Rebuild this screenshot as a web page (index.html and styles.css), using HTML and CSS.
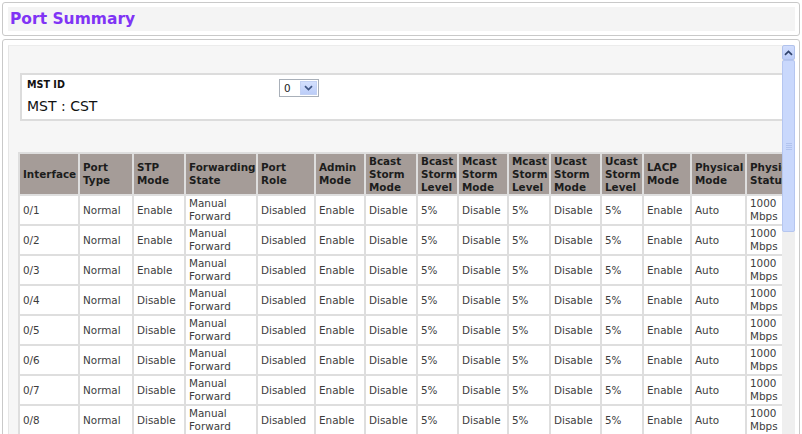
FILE: index.html
```html
<!DOCTYPE html>
<html lang="en">
<head>
<meta charset="UTF-8" />
<meta name="viewport" content="width=device-width, initial-scale=1" />
<title>Port Summary</title>
<link rel="stylesheet" href="styles.css">
</head>
<body>

<section class="panel titlePanel">
  <div class="titleBar"><h1 class="pageTitle">Port Summary</h1></div>
</section>

<section class="panel contentPanel">
  <div class="viewport">
    <div class="scrollArea">

      <div class="mstBox">
        <div class="mstRow">
          <span class="mstLabel">MST ID</span>
          <div class="fakeSelect">
            <span class="selectValue">0</span>
            <span class="selectBtn">
              <svg width="9" height="6" viewBox="0 0 9 6"><path d="M1 1.2 L4.5 4.6 L8 1.2" fill="none" stroke="#3e5583" stroke-width="1.7"/></svg>
            </span>
          </div>
        </div>
        <div class="mstName">MST : CST</div>
      </div>

      <table class="summary">
        <thead>
          <tr>
            <th class="w58">Interface</th>
            <th class="w52">Port Type</th>
            <th class="w50">STP Mode</th>
            <th class="w70">Forwarding State</th>
            <th class="w56">Port Role</th>
            <th class="w48">Admin Mode</th>
            <th class="w50">Bcast Storm Mode</th>
            <th class="w39">Bcast Storm Level</th>
            <th class="w48">Mcast Storm Mode</th>
            <th class="w40">Mcast Storm Level</th>
            <th class="w49">Ucast Storm Mode</th>
            <th class="w40">Ucast Storm Level</th>
            <th class="w46">LACP Mode</th>
            <th class="w53">Physical Mode</th>
            <th class="w55">Physical Status</th>
          </tr>
        </thead>
        <tbody id="rows"></tbody>
      </table>

    </div>

    <div class="scrollbar">
      <div class="sbButton">
        <svg width="9" height="6" viewBox="0 0 9 6"><path d="M1 4.8 L4.5 1.4 L8 4.8" fill="none" stroke="#2f426b" stroke-width="1.7"/></svg>
      </div>
      <div class="sbThumb"><span class="sbGrip"></span></div>
      <div class="sbTrack"></div>
    </div>
  </div>
</section>

<script>
  const ports = [
    ["0/1", "Enable"], ["0/2", "Enable"], ["0/3", "Enable"], ["0/4", "Disable"],
    ["0/5", "Disable"], ["0/6", "Disable"], ["0/7", "Disable"], ["0/8", "Disable"]
  ];
  const body = document.getElementById("rows");

  ports.forEach(([port, stp]) => {
    const cells = [port, "Normal", stp, "Manual Forward", "Disabled", "Enable",
      "Disable", "5%", "Disable", "5%", "Disable", "5%", "Enable", "Auto", "1000 Mbps"];
    const tr = document.createElement("tr");
    cells.forEach(text => {
      const td = document.createElement("td");
      td.textContent = text;
      tr.appendChild(td);
    });
    body.appendChild(tr);
  });
</script>

</body>
</html>
```

FILE: styles.css
```css
* {
  box-sizing: border-box;
}

html, body {
  height: 100%;
}

body {
  margin: 0;
  padding: 2px 2px 0 2px;
  background: #fff;
  font-family: "DejaVu Sans", Verdana, sans-serif;
  overflow: hidden;
}

.panel {
  border: 1px solid #c9c9c9;
  border-radius: 3px;
  background: #fff;
}

.titlePanel {
  padding: 4px 4px 4px 5px;
}

.titleBar {
  height: 24px;
  background: #f4f4f4;
  padding-left: 2px;
  display: flex;
  align-items: center;
}

.pageTitle {
  margin: 0;
  font-size: 15.5px;
  font-weight: bold;
  color: #8034f5;
}

.contentPanel {
  margin-top: 3px;
  padding: 5px 4px 0 5px;
  height: 420px;
}

.viewport {
  display: flex;
  height: 100%;
}

.scrollArea {
  flex: 1;
  min-width: 0;
  overflow: hidden;
  background: #f6f6f6;
  border-top: 1px solid #ececec;
  border-left: 1px solid #e6e6e6;
  padding: 27px 0 0 9px;
}

/* MST selector box */
.mstBox {
  margin-left: 2px;
  width: 790px;
  height: 48px;
  border: 2px solid #dcdcdc;
  background: #fff;
  padding: 4px 5px 0 5px;
}

.mstRow {
  display: grid;
  grid-template-columns: 252px 40px;
  align-items: start;
}

.mstLabel {
  font-size: 9.6px;
  font-weight: bold;
  line-height: 12px;
  color: #111;
}

.fakeSelect {
  display: flex;
  width: 40px;
  height: 18px;
  border: 1px solid #a9b0b9;
  background: #fff;
  padding: 1px;
}

.selectValue {
  flex: 1;
  font-size: 10.4px;
  line-height: 14px;
  padding-left: 3px;
  color: #222;
}

.selectBtn {
  width: 17px;
  display: flex;
  align-items: center;
  justify-content: center;
  background: linear-gradient(#d3dffd, #bccdf8);
  border: 1px solid #c3d1f3;
}

.mstName {
  font-size: 14px;
  line-height: 17px;
  color: #111;
  margin-top: 1px;
}

/* summary table */
.summary {
  margin-top: 31px;
  border-collapse: separate;
  border-spacing: 2px;
  background: #dedede;
  table-layout: fixed;
  width: 786px;
}

.summary th {
  height: 40px;
  padding: 0 3px;
  background: #a59c98;
  color: #1c1c1c;
  font-size: 10.4px;
  font-weight: bold;
  line-height: 13px;
  text-align: left;
  vertical-align: middle;
  overflow: visible;
}

.summary td {
  height: 28px;
  padding: 0 3px;
  background: #fff;
  color: #3d3d3d;
  font-size: 10.4px;
  line-height: 13px;
  vertical-align: middle;
}

.w39 { width: 39px; }
.w40 { width: 40px; }
.w46 { width: 46px; }
.w48 { width: 48px; }
.w49 { width: 49px; }
.w50 { width: 50px; }
.w52 { width: 52px; }
.w53 { width: 53px; }
.w55 { width: 55px; }
.w56 { width: 56px; }
.w58 { width: 58px; }
.w70 { width: 70px; }

/* fake vertical scrollbar */
.scrollbar {
  width: 13px;
  display: flex;
  flex-direction: column;
  background: #efefef;
}

.sbButton {
  height: 15px;
  display: flex;
  align-items: center;
  justify-content: center;
  background: linear-gradient(#d2defd, #bccdf8);
  border: 1px solid #b1c2ec;
  border-radius: 2px;
}

.sbThumb {
  height: 172px;
  display: flex;
  align-items: center;
  justify-content: center;
  background: #c9d8fc;
  border: 1px solid #b5c6f0;
  border-radius: 2px;
}

.sbGrip {
  width: 6px;
  height: 7px;
  background: repeating-linear-gradient(#b1c3ee 0 1px, transparent 1px 2px);
}

.sbTrack {
  flex: 1;
}
```
